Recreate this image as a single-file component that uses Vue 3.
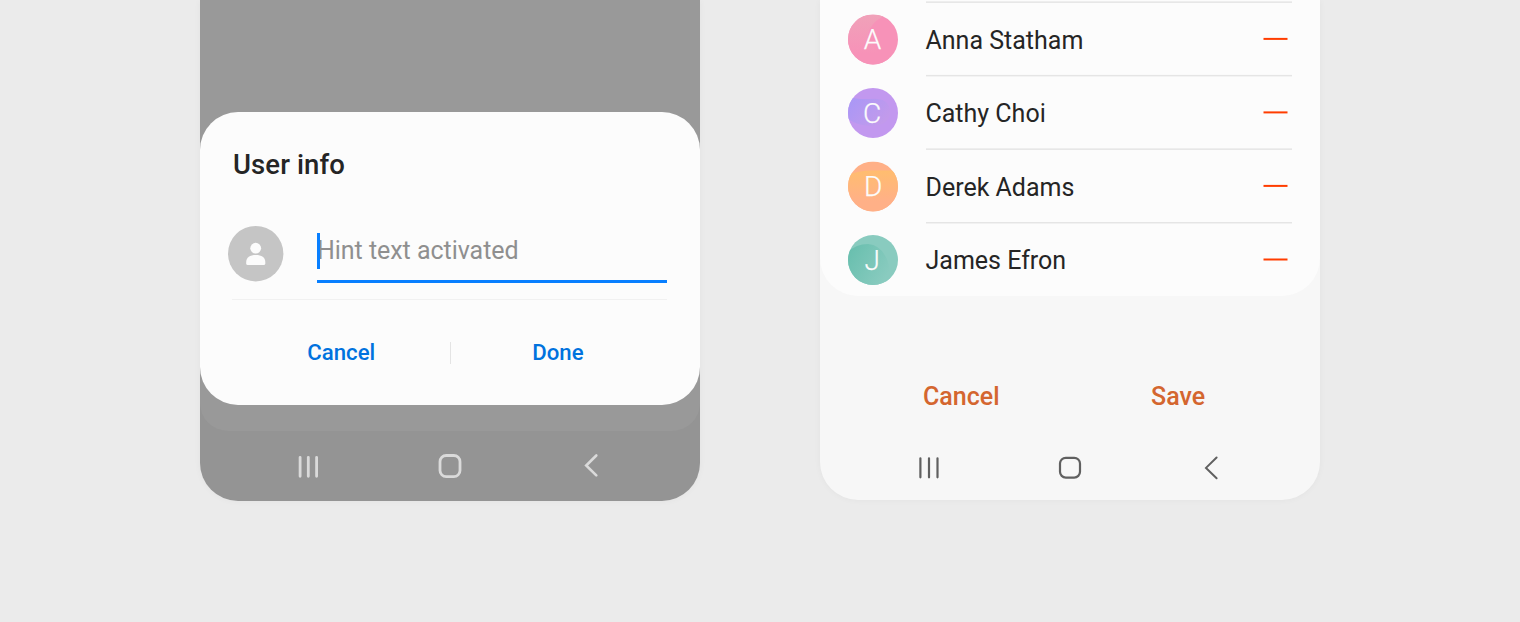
<script setup>
const contacts = [
  { name: 'Anna Statham', letter: 'A', x: 24.4, base: '#f792b8', from: '#f0a2b9', to: '#f792b8', vertical: true, d: 'M0 0H39Q27 5 22 14Q17 24 28 35Q34 44 52 46V52H0Z', height: 73, shift: 0.4 },
  { name: 'Cathy Choi', letter: 'C', x: 24.1, base: '#c298ef', from: '#a797f7', to: '#c29aeb', d: 'M0 8Q9 12 23 11Q42 10 42 24Q42 37 24 38Q10 38 0 31Z', height: 74, shift: 0.9 },
  { name: 'Derek Adams', letter: 'D', x: 25.1, base: '#ffb087', from: '#ffbd6f', to: '#ffb087', vertical: true, d: 'M0 14Q9 9 25 9H52V50H0Z', height: 73, shift: 0.4 },
  { name: 'James Efron', letter: 'J', x: 24.3, base: '#89cbbf', from: '#66bead', to: '#89cbbf', d: 'M0 17Q8 9 20 9Q34 10 40 27Q43 36 42 52H0Z', height: 75, shift: 1 }
]
</script>

<template>
  <main class="stage">
    <section class="phone dimmed">
      <div class="backdrop"></div>
      <svg class="nav" viewBox="0 0 500 71" fill="none" stroke="#dadada" stroke-width="2.8" stroke-linecap="round">
        <path d="M100.1 27.3V46.3M108.3 27.3V46.3M116.6 27.3V46.3" />
        <rect x="240" y="25.5" width="20" height="21.2" rx="6.2" />
        <path d="M396.3 25.5L386.2 35.5L396.3 45.4" stroke-width="2.6" />
      </svg>
      <div class="dialog">
        <h1>User info</h1>
        <div class="entry">
          <svg class="person" viewBox="0 0 56 56">
            <circle cx="27.7" cy="27.7" r="27.7" fill="#c5c5c5" />
            <circle cx="27.7" cy="22.2" r="5.4" fill="#fcfcfc" />
            <path d="M18.2 37.5V36C18.2 31.5 22 29 27.8 29S37.3 31.5 37.3 36V37.5Q37.3 39.1 35.7 39.1H19.8Q18.2 39.1 18.2 37.5Z" fill="#fcfcfc" />
          </svg>
          <div class="field"><i class="caret"></i><span>Hint text activated</span></div>
        </div>
        <div class="line"></div>
        <div class="actions">
          <button class="cancel">Cancel</button>
          <i class="split"></i>
          <button class="done">Done</button>
        </div>
      </div>
    </section>

    <section class="phone light">
      <div class="list">
        <div v-for="(c, i) in contacts" :key="c.name" class="row" :style="{ height: c.height + 'px' }">
          <svg class="avatar" viewBox="0 0 50 52">
            <defs>
              <clipPath :id="'clip' + i"><circle cx="25" cy="25" r="25" /></clipPath>
              <linearGradient :id="'tone' + i" x1="0" y1="0" :x2="c.vertical ? 0 : 1" :y2="c.vertical ? 0.75 : 0.6">
                <stop :stop-color="c.from" /><stop offset="1" :stop-color="c.to" />
              </linearGradient>
            </defs>
            <g :transform="`translate(0 ${c.shift})`">
              <g :clip-path="`url(#clip${i})`">
                <rect width="50" height="52" :fill="c.base" />
                <path :d="c.d" :fill="`url(#tone${i})`" />
              </g>
              <text :x="c.x" y="34.7" text-anchor="middle">{{ c.letter }}</text>
            </g>
          </svg>
          <span class="name">{{ c.name }}</span>
          <svg class="minus" viewBox="0 0 25 4"><rect x="0.5" :y="0.5 + c.shift" width="24" height="2" fill="#ff3d00" /></svg>
          <svg class="rule" viewBox="0 0 366 3"><rect y="0" :transform="`translate(0 ${c.shift})`" width="366" height="1.5" fill="#e5e5e5" /></svg>
        </div>
      </div>
      <div class="footer">
        <button class="cancel">Cancel</button>
        <button class="save">Save</button>
      </div>
      <svg class="nav" viewBox="0 0 500 71" fill="none" stroke="#606060" stroke-width="2.2" stroke-linecap="round">
        <path d="M100.4 29.3V48.3M109 29.3V48.3M117.5 29.3V48.3" />
        <rect x="240" y="28.8" width="20" height="19.8" rx="5.8" />
        <path d="M396.6 28.5L386 38.9L396.6 49.3" stroke-width="2" />
      </svg>
    </section>
  </main>
</template>

<style>
html, body { margin: 0; background: #ebebeb; overflow: hidden; }
</style>

<style scoped>
.stage { width: 1520px; height: 622px; box-sizing: border-box; padding: 0 200px; display: flex; gap: 120px; background: #ebebeb; overflow: hidden; font-family: Roboto, "Liberation Sans", sans-serif; color: #252525; }
.phone { position: relative; width: 500px; height: 501px; border-radius: 0 0 38px 38px; overflow: hidden; display: flex; flex-direction: column; box-shadow: 0 0 7px rgba(0, 0, 0, 0.04); }
.dimmed { background: #949494; }
.light { background: #f7f7f7; height: 500px; }
.backdrop { height: 431px; background: #999; border-radius: 0 0 28px 28px; flex: none; }
.nav { display: block; width: 500px; height: 71px; flex: none; }
.dimmed .nav { margin-top: -1px; }
.dialog { position: absolute; left: 0; top: 112px; width: 500px; height: 293px; border-radius: 38px; background: #fcfcfc; display: flex; flex-direction: column; }
h1 { margin: 35px 0 0 33px; font-size: 27.5px; line-height: 36px; height: 36px; font-weight: 500; letter-spacing: 0.1px; }
.entry { display: flex; padding-left: 28px; margin-top: 43px; height: 57px; }
.person { width: 56px; height: 56px; flex: none; }
.field { display: flex; width: 350px; height: 54px; margin-left: 33px; border-bottom: 3px solid #087fff; color: #8f8f8f; font-size: 25px; line-height: 49px; letter-spacing: -0.04px; white-space: nowrap; }
.caret { width: 3px; height: 36px; margin: 7px -3px 0 0; background: #087fff; z-index: 1; }
.line { height: 1px; width: 435px; margin: 16px 0 0 32px; background: #f1f1f1; }
.actions { display: flex; align-items: center; height: 105px; }
button { border: 0; padding: 0; background: none; font: 500 22.2px/28px Roboto, "Liberation Sans", sans-serif; color: #0072de; text-align: left; white-space: nowrap; }
.actions button { padding-bottom: 2px; }
.actions .cancel { margin-left: 107.3px; width: 142.7px; }
.split { width: 1px; height: 22px; margin-right: 81.3px; background: #e4e4e4; }
.list { height: 296px; box-sizing: border-box; padding-top: 1px; background: #fcfcfc; border-radius: 0 0 38px 38px; flex: none; }
.row { display: grid; grid-template-columns: 50px 1fr 29px; column-gap: 28px; padding: 0 28px; align-items: start; }
.avatar { width: 50px; height: 52px; margin-top: 13px; grid-area: 1 / 1; }
.avatar text { font: 300 28px Roboto, sans-serif; fill: #fcfcfc; stroke: #fcfcfc; stroke-width: 0.25px; }
.name { grid-area: 1 / 2; margin: 21px 0 0 -0.5px; font-size: 25px; line-height: 38px; white-space: nowrap; }
.minus { grid-area: 1 / 3; width: 25px; height: 4px; margin-top: 36px; }
.rule { grid-area: 1 / 2 / 2 / 4; width: 366px; height: 3px; }
.footer { display: flex; height: 133px; box-sizing: border-box; padding: 86px 0 0 103px; }
.footer button { font-size: 25px; line-height: 30px; height: 30px; color: #d4662f; }
.footer .cancel { width: 228px; }
</style>
